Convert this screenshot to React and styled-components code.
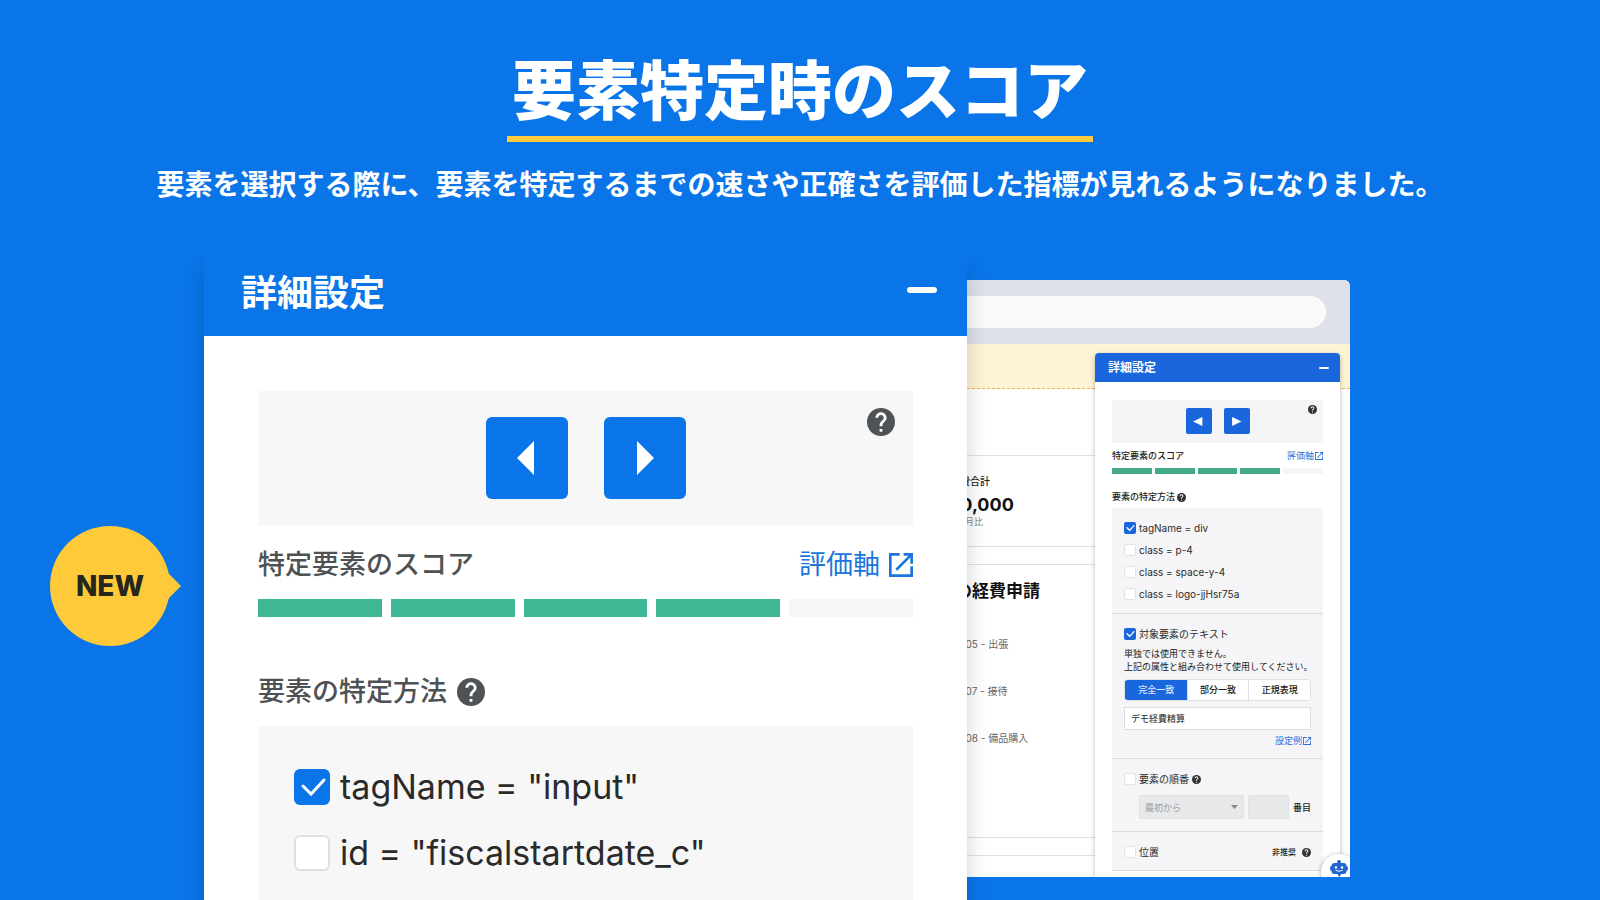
import React, { useState } from 'react';
import styled, { createGlobalStyle } from 'styled-components';

const GlobalStyle = createGlobalStyle`
    * {
        box-sizing: border-box;
    }
    body {
        margin: 0;
        background-color: #0a75e8;
        font-family: Inter, "Noto Sans CJK JP", sans-serif;
    }
    h1, h2, h3, p, ul {
        margin: 0;
        padding: 0;
        list-style: none;
    }
    button, input, select {
        font-family: inherit;
    }
`;

const Page = styled.main`
    min-height: 100vh;
    display: flex;
    flex-direction: column;
    overflow: hidden;
    background-color: #0a75e8;
`;

const Hero = styled.header`
    display: flex;
    flex-direction: column;
    align-items: center;
    padding-top: 46px;
    color: #fff;
    height: 250px;
`;

const Title = styled.h1`
    font-size: 64px;
    line-height: 90px;
    font-weight: 900;
    padding: 0 5px;
    border-bottom: 6px solid #fdcb40;
`;

const Lead = styled.p`
    margin-top: 23px;
    font-size: 28px;
    line-height: 40px;
    font-weight: 700;
`;

const Stage = styled.section`
    flex: 1;
    display: grid;
    grid-template-columns: 154px minmax(0, 763fr) minmax(0, 383fr);
    padding: 0 250px 0 50px;
`;

const Badge = styled.div`
    position: relative;
    width: 120px;
    height: 120px;
    margin-top: 276px;
    border-radius: 50%;
    background-color: #ffca3a;
    color: #26261c;
    display: flex;
    align-items: center;
    justify-content: center;
    font-size: 28px;
    font-weight: 800;

    &::after {
        content: '';
        position: absolute;
        top: 46px;
        right: -11px;
        border-left: 14px solid #ffca3a;
        border-top: 14px solid transparent;
        border-bottom: 14px solid transparent;
    }
`;

/* large panel */

const Panel = styled.section`
    position: relative;
    z-index: 1;
    display: flex;
    flex-direction: column;
    background-color: #fff;
    box-shadow: 0 20px 20px rgba(0, 0, 0, 0.18);
`;

const PanelHeader = styled.div`
    height: 86px;
    padding: 17px 30px 0 37px;
    display: flex;
    align-items: flex-start;
    justify-content: space-between;
    background-color: #0a75e8;
`;

const PanelTitle = styled.h2`
    color: #fff;
    font-size: 36px;
    line-height: 52px;
    font-weight: 700;
`;

const CloseButton = styled.button`
    border: none;
    padding: 0;
    margin-top: ${({ $mini }) => ($mini ? '0' : '20px')};
    width: ${({ $mini }) => ($mini ? '10px' : '30px')};
    height: ${({ $mini }) => ($mini ? '2px' : '6px')};
    border-radius: 3px;
    background-color: #fff;
    cursor: pointer;
`;

const PanelBody = styled.div`
    flex: 1;
    display: flex;
    flex-direction: column;
    padding: 55px 54px 0;
`;

const Navigator = styled.div`
    display: grid;
    grid-template-columns: 1fr auto 1fr;
    background-color: ${({ $mini }) => ($mini ? '#f5f5f7' : '#f7f7f7')};
    padding: ${({ $mini }) => ($mini ? '8px 6px 9px' : '26px 18px 27px')};
`;

const NavButtons = styled.div`
    grid-column: 2;
    display: flex;
    gap: ${({ $mini }) => ($mini ? '12px' : '36px')};
`;

const NavButton = styled.button`
    width: ${({ $mini }) => ($mini ? '26px' : '82px')};
    height: ${({ $mini }) => ($mini ? '26px' : '82px')};
    padding: 0;
    border: none;
    border-radius: ${({ $mini }) => ($mini ? '2px' : '6px')};
    background-color: ${({ $mini }) => ($mini ? '#1a66dd' : '#0a75e8')};
    display: flex;
    align-items: center;
    justify-content: center;
    cursor: pointer;
`;

const NavHelp = styled.div`
    grid-column: 3;
    justify-self: end;
    display: flex;
    align-items: flex-start;
    margin-top: ${({ $mini }) => ($mini ? '-3px' : '-9px')};
`;

const Row = styled.div`
    display: flex;
    align-items: center;
    justify-content: space-between;
`;

const ScoreRow = styled(Row)`
    margin-top: ${({ $mini }) => ($mini ? '6px' : '19px')};
`;

const Label = styled.h3`
    display: flex;
    align-items: center;
    gap: ${({ $mini }) => ($mini ? '2px' : '10px')};
    font-size: ${({ $mini }) => ($mini ? '9px' : '27px')};
    line-height: ${({ $mini }) => ($mini ? '14px' : '40px')};
    font-weight: 500;
    color: ${({ $mini }) => ($mini ? '#222' : '#4f5254')};
`;

const Link = styled.a`
    display: flex;
    align-items: center;
    gap: ${({ $mini }) => ($mini ? '1px' : '9px')};
    font-size: ${({ $mini }) => ($mini ? '9px' : '27px')};
    line-height: ${({ $mini }) => ($mini ? '14px' : '40px')};
    color: ${({ $mini }) => ($mini ? '#2f70de' : '#1a76dc')};
    text-decoration: none;
`;

const Score = styled.div`
    display: grid;
    grid-template-columns: repeat(5, 1fr);
    gap: ${({ $mini }) => ($mini ? '3px' : '9px')};
    margin-top: ${({ $mini }) => ($mini ? '5px' : '14px')};
    margin-bottom: ${({ $mini }) => ($mini ? '16px' : '55px')};
`;

const ScoreBar = styled.span`
    height: ${({ $mini }) => ($mini ? '6px' : '18px')};
    background-color: ${({ $on, $mini }) => ($on ? ($mini ? '#43ac87' : '#3db794') : '#f6f6f6')};
`;

const Methods = styled.div`
    flex: 1;
    display: flex;
    flex-direction: column;
    gap: 30px;
    margin-top: 14px;
    padding: 43px 36px 29px;
    background-color: #f7f7f7;
`;

const CheckLabel = styled.label`
    display: flex;
    align-items: center;
    gap: ${({ $mini }) => ($mini ? '3px' : '10px')};
    font-size: ${({ $mini }) => ($mini ? '10px' : '34px')};
    line-height: ${({ $mini }) => ($mini ? '12px' : '36px')};
    color: #2a2a2a;
`;

const CheckBox = styled.span`
    position: relative;
    flex: none;
    width: ${({ $mini }) => ($mini ? '12px' : '36px')};
    height: ${({ $mini }) => ($mini ? '12px' : '36px')};

    input {
        appearance: none;
        display: block;
        width: 100%;
        height: 100%;
        margin: 0;
        border: ${({ $mini }) => ($mini ? '1px solid #e3e3e6' : '2px solid #e0e0e0')};
        border-radius: ${({ $mini }) => ($mini ? '2px' : '6px')};
        background-color: #fff;
    }

    input:checked {
        border: none;
        background-color: ${({ $mini }) => ($mini ? '#1a66dd' : '#0a75e8')};
    }

    svg {
        position: absolute;
        inset: 0;
        width: 100%;
        height: 100%;
        pointer-events: none;
    }
`;

/* browser window behind the panel */

const Browser = styled.section`
    position: relative;
    display: flex;
    flex-direction: column;
    margin: 30px 0 23px -100px;
    border-radius: 0 6px 0 0;
    overflow: hidden;
    background-color: #fff;
`;

const BrowserBar = styled.div`
    padding: 16px 24px;
    background-color: #dee1e7;
`;

const AddressInput = styled.input`
    display: block;
    width: 100%;
    height: 32px;
    border: none;
    border-radius: 16px;
    background-color: #fafafb;
`;

const Site = styled.div`
    flex: 1;
    display: flex;
    flex-direction: column;
`;

const Notice = styled.div`
    height: 45px;
    border-bottom: 1px dashed #e9b552;
    background-color: #fff3d6;
`;

const StatCard = styled.div`
    height: 92px;
    margin: 66px 50px 0 0;
    padding: 18px 0 0 83px;
    border: solid #e0e0e0;
    border-width: 1px 0;
`;

const StatLabel = styled.p`
    font-size: 10px;
    line-height: 14px;
    font-weight: 500;
    color: #222;
`;

const StatValue = styled.p`
    margin-top: 6px;
    font-size: 18px;
    line-height: 22px;
    font-weight: 700;
    color: #111;
`;

const StatNote = styled.p`
    padding-left: 6px;
    font-size: 9px;
    line-height: 12px;
    color: #888;
`;

const ListCard = styled.div`
    height: 274px;
    margin: 17px 50px 0 0;
    padding: 14px 0 0 54px;
    border: solid #e0e0e0;
    border-width: 1px 0;
`;

const ListTitle = styled.h2`
    font-size: 17px;
    line-height: 24px;
    font-weight: 700;
    color: #111;
`;

const ExpenseList = styled.ul`
    margin-top: 34px;
    display: flex;
    flex-direction: column;
    gap: 33px;
    font-size: 10px;
    line-height: 14px;
    color: #666;
`;

const NextCard = styled.div`
    flex: 1;
    margin: 17px 50px 0 0;
    border-top: 1px solid #e0e0e0;
`;

/* small panel floating over the site */

const MiniPanel = styled.section`
    position: absolute;
    top: 73px;
    right: 10px;
    bottom: 0;
    width: 245px;
    border-radius: 4px 4px 0 0;
    overflow: hidden;
    background-color: #fff;
    box-shadow: 0 2px 5px rgba(0, 0, 0, 0.28);
`;

const MiniHeader = styled.div`
    height: 29px;
    padding: 0 11px 0 13px;
    display: flex;
    align-items: center;
    justify-content: space-between;
    background-color: #1a66dd;
`;

const MiniTitle = styled.h2`
    color: #fff;
    font-size: 12px;
    line-height: 18px;
    font-weight: 700;
`;

const MiniBody = styled.div`
    padding: 18px 17px 0;
`;

const MiniMethods = styled.div`
    margin-top: 4px;
    background-color: #f5f5f7;
`;

const MiniGroup = styled.div`
    display: flex;
    flex-direction: column;
    gap: ${({ $gap }) => $gap || '10px'};
    padding: 14px 12px ${({ $bottom }) => $bottom || '12px'};
    border-bottom: 1px solid #dcdcdf;
`;

const MiniNote = styled.p`
    margin-top: 1px;
    font-size: 9px;
    line-height: 13px;
    color: #222;
    white-space: nowrap;
`;

const Segments = styled.div`
    display: grid;
    grid-template-columns: repeat(3, 1fr);
    height: 22px;
    border: 1px solid #e1e1e5;
    border-radius: 4px;
    overflow: hidden;
`;

const Segment = styled.button`
    padding: 0;
    border: none;
    border-left: 1px solid ${({ $active }) => ($active ? '#1a66dd' : '#e1e1e5')};
    background-color: ${({ $active }) => ($active ? '#1a66dd' : '#fff')};
    color: ${({ $active }) => ($active ? '#d9e6fb' : '#222')};
    font-size: 9px;
    line-height: 14px;
    font-weight: 500;
    cursor: pointer;
`;

const TextInput = styled.input`
    width: 100%;
    height: 23px;
    padding: 0 6px;
    border: 1px solid #dedee2;
    background-color: #fff;
    color: #222;
    font-size: 9px;
`;

const LinkRow = styled.div`
    display: flex;
    justify-content: flex-end;
    margin-top: -2px;
`;

const OrderRow = styled.div`
    display: flex;
    align-items: center;
    gap: 4px;
    padding-left: 15px;
    font-size: 9px;
    font-weight: 500;
    color: #222;
`;

const SelectWrap = styled.div`
    position: relative;
    flex: 1;

    svg {
        position: absolute;
        top: 10px;
        right: 6px;
    }
`;

const OrderSelect = styled.select`
    appearance: none;
    display: block;
    width: 100%;
    height: 24px;
    padding: 0 5px;
    border: 1px solid #e0e1e3;
    border-radius: 2px;
    background-color: #e7e8ea;
    color: #999;
    font-size: 9px;
    opacity: 1;
`;

const OrderInput = styled.input`
    width: 41px;
    height: 24px;
    border: 1px solid #e0e1e3;
    border-radius: 2px;
    background-color: #e7e8ea;
`;

const Discouraged = styled.span`
    display: flex;
    align-items: center;
    gap: 6px;
    font-size: 8px;
    line-height: 12px;
    font-weight: 500;
    color: #222;
`;

const HelpInline = styled.div`
    display: flex;
    align-items: center;
    gap: 3px;
`;

const ChatButton = styled.button`
    position: absolute;
    right: -7px;
    bottom: -13px;
    width: 36px;
    height: 36px;
    padding: 5px 0 0 9px;
    border: none;
    border-radius: 50%;
    background-color: #fff;
    box-shadow: 0 1px 5px rgba(0, 0, 0, 0.35);
    display: flex;
    cursor: pointer;
`;

const HelpIcon = ({ size, color = '#4f5355' }) => (
    <svg width={size} height={size} viewBox="2 2 20 20" fill={color}>
        <circle cx="12" cy="12" r="10" />
        <path
            fill="#fff"
            d="M13 19h-2v-2h2v2zm2.07-7.75l-.9.92C13.45 12.9 13 13.5 13 15h-2v-.5c0-1.1.45-2.1 1.17-2.83l1.24-1.26c.37-.36.59-.86.59-1.41 0-1.1-.9-2-2-2s-2 .9-2 2H8c0-2.21 1.79-4 4-4s4 1.79 4 4c0 .88-.36 1.68-.93 2.25z"
        />
    </svg>
);

const OpenIcon = ({ size }) => (
    <svg width={size} height={size} viewBox="3 3 18 18" fill="currentColor">
        <path d="M19 19H5V5h6V3H3v18h18v-8h-2v6z" />
        <path d="M14 3v2h3.59l-9.83 9.83 1.41 1.41L19 6.41V11h2V3h-7z" />
    </svg>
);

const Triangle = ({ right, mini }) => (
    <svg width={mini ? 11 : 20} height={mini ? 9 : 34} viewBox="0 0 20 34" preserveAspectRatio="none" fill="#fff">
        <path d={right ? 'M2 0l17 17L2 34z' : 'M17 0L0 17l17 17z'} />
    </svg>
);

const RobotIcon = () => (
    <svg width="18" height="18" viewBox="0 0 18 18" fill="#2265cf">
        <circle cx="9" cy="3" r="2" />
        <rect x="0" y="7" width="18" height="5" rx="2" />
        <path d="M4.5 4h9a3 3 0 0 1 3 3v5a3 3 0 0 1-3 3h-2l-2.5 3-1.5-3h-3a3 3 0 0 1-3-3V7a3 3 0 0 1 3-3z" />
        <circle cx="6" cy="8.5" r="1.2" fill="#fff" />
        <circle cx="12" cy="8.5" r="1.2" fill="#fff" />
        <path d="M5.5 11.2q3.5 2.2 7 0" fill="none" stroke="#fff" />
    </svg>
);

const Check = ({ mini, defaultChecked, children }) => {
    const [checked, setChecked] = useState(!!defaultChecked);
    return (
        <CheckLabel $mini={mini}>
            <CheckBox $mini={mini}>
                <input type="checkbox" checked={checked} onChange={() => setChecked(!checked)} />
                {checked && (
                    <svg viewBox="0 0 36 36" fill="none" stroke="#fff" strokeWidth={mini ? 4 : 3} strokeLinecap="round">
                        <path d="M9 17l8 8 13-14" />
                    </svg>
                )}
            </CheckBox>
            {children}
        </CheckLabel>
    );
};

const ScoreSection = ({ mini }) => (
    <>
        <Navigator $mini={mini}>
            <NavButtons $mini={mini}>
                <NavButton $mini={mini} aria-label="前へ"><Triangle mini={mini} /></NavButton>
                <NavButton $mini={mini} aria-label="次へ"><Triangle mini={mini} right /></NavButton>
            </NavButtons>
            <NavHelp $mini={mini}>
                <HelpIcon size={mini ? 9 : 28} color={mini ? '#333' : undefined} />
            </NavHelp>
        </Navigator>
        <ScoreRow $mini={mini}>
            <Label $mini={mini}>特定要素のスコア</Label>
            <Link $mini={mini} href="#score">評価軸<OpenIcon size={mini ? 8 : 24} /></Link>
        </ScoreRow>
        <Score $mini={mini}>
            {[1, 2, 3, 4, 5].map((n) => (
                <ScoreBar key={n} $mini={mini} $on={n < 5} />
            ))}
        </Score>
        <Label $mini={mini}>要素の特定方法<HelpIcon size={mini ? 9 : 28} color={mini ? '#333' : undefined} /></Label>
    </>
);

const expenses = ['2024/06/05 - 出張', '2024/06/07 - 接待', '2024/06/08 - 備品購入'];
const matchTypes = ['完全一致', '部分一致', '正規表現'];

const MiniSettings = () => {
    const [match, setMatch] = useState('完全一致');
    return (
        <MiniPanel>
            <MiniHeader>
                <MiniTitle>詳細設定</MiniTitle>
                <CloseButton $mini aria-label="最小化" />
            </MiniHeader>
            <MiniBody>
                <ScoreSection mini />
                <MiniMethods>
                    <MiniGroup $bottom="13px">
                        <Check mini defaultChecked>tagName = div</Check>
                        <Check mini>class = p-4</Check>
                        <Check mini>class = space-y-4</Check>
                        <Check mini>class = logo-jjHsr75a</Check>
                    </MiniGroup>
                    <MiniGroup $gap="6px" $bottom="10px">
                        <Check mini defaultChecked>対象要素のテキスト</Check>
                        <MiniNote>単独では使用できません。<br />上記の属性と組み合わせて使用してください。</MiniNote>
                        <Segments>
                            {matchTypes.map((type) => (
                                <Segment key={type} $active={type === match} onClick={() => setMatch(type)}>{type}</Segment>
                            ))}
                        </Segments>
                        <TextInput aria-label="テキスト" defaultValue="デモ経費精算" />
                        <LinkRow>
                            <Link $mini href="#example">設定例<OpenIcon size={8} /></Link>
                        </LinkRow>
                    </MiniGroup>
                    <MiniGroup>
                        <HelpInline>
                            <Check mini>要素の順番</Check>
                            <HelpIcon size={9} color="#333" />
                        </HelpInline>
                        <OrderRow>
                            <SelectWrap>
                                <OrderSelect aria-label="順番の基準" disabled>
                                    <option>最初から</option>
                                </OrderSelect>
                                <svg width="7" height="4" viewBox="0 0 7 4" fill="#888"><path d="M0 0h7L3.5 4z" /></svg>
                            </SelectWrap>
                            <OrderInput id="order" disabled />
                            <label htmlFor="order">番目</label>
                        </OrderRow>
                    </MiniGroup>
                    <MiniGroup>
                        <Row>
                            <Check mini>位置</Check>
                            <Discouraged>非推奨<HelpIcon size={9} color="#333" /></Discouraged>
                        </Row>
                    </MiniGroup>
                </MiniMethods>
            </MiniBody>
        </MiniPanel>
    );
};

const App = () => (
    <>
        <GlobalStyle />
        <Page>
            <Hero>
                <Title>要素特定時のスコア</Title>
                <Lead>要素を選択する際に、要素を特定するまでの速さや正確さを評価した指標が見れるようになりました。</Lead>
            </Hero>
            <Stage>
                <Badge>NEW</Badge>
                <Panel>
                    <PanelHeader>
                        <PanelTitle>詳細設定</PanelTitle>
                        <CloseButton aria-label="最小化" />
                    </PanelHeader>
                    <PanelBody>
                        <ScoreSection />
                        <Methods>
                            <Check defaultChecked>tagName = "input"</Check>
                            <Check>id = "fiscalstartdate_c"</Check>
                        </Methods>
                    </PanelBody>
                </Panel>
                <Browser>
                    <BrowserBar>
                        <AddressInput aria-label="アドレス" />
                    </BrowserBar>
                    <Site>
                        <Notice />
                        <StatCard>
                            <StatLabel>経費合計</StatLabel>
                            <StatValue>¥0,000</StatValue>
                            <StatNote>前月比</StatNote>
                        </StatCard>
                        <ListCard>
                            <ListTitle>最近の経費申請</ListTitle>
                            <ExpenseList>
                                {expenses.map((expense) => (
                                    <li key={expense}>{expense}</li>
                                ))}
                            </ExpenseList>
                        </ListCard>
                        <NextCard />
                    </Site>
                    <MiniSettings />
                    <ChatButton aria-label="チャット"><RobotIcon /></ChatButton>
                </Browser>
            </Stage>
        </Page>
    </>
);

export default App;
